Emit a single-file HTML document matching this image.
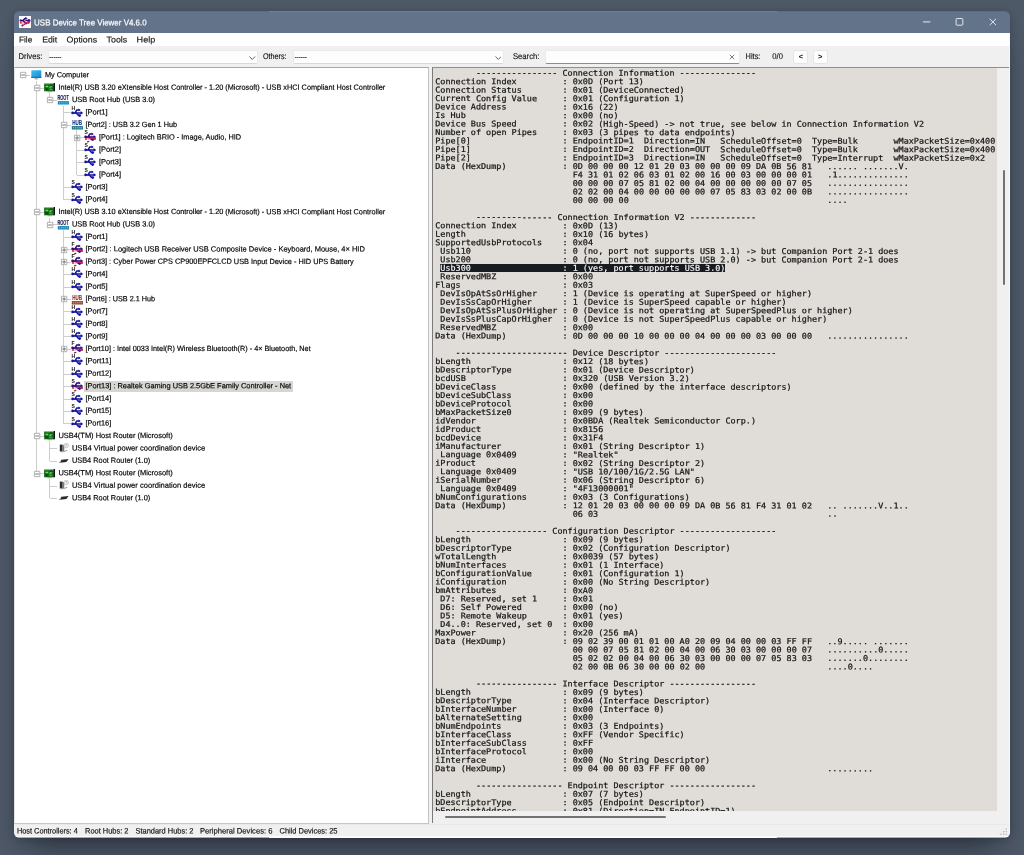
<!DOCTYPE html>
<html lang="en"><head><meta charset="utf-8"><title>USB Device Tree Viewer V4.6.0</title>
<style>
*{box-sizing:border-box;margin:0;padding:0}
html,body{width:1024px;height:855px;overflow:hidden}
body{background:#4e5968;font-family:"Liberation Sans",Arial,sans-serif;position:relative}
.win div,.win span,.win svg{position:absolute}
.win{position:absolute;left:14px;top:11px;width:996px;height:826.6px;background:#f0f0f0;clip-path:inset(.55px 0 0 0 round 5px);overflow:hidden;will-change:transform}
.shadow{position:absolute;left:14px;top:11px;width:996px;height:826.6px;border-radius:6px;box-shadow:0 22px 32px -14px rgba(5,8,16,.47),0 1px 8px rgba(5,8,16,.22)}
.x{white-space:nowrap;transform-origin:0 50%;display:block}
.title{left:0;top:0;width:996px;height:21.5px;background:#63748a;border-top:1.4px solid #6e7f96}
.tt{height:16px;line-height:16px;font-size:8.6px;color:#fff;-webkit-text-stroke:.2px #fff}
.menubar{left:0;top:21.5px;width:996px;height:13.6px;background:#fff}
.mi{height:15px;line-height:15px;font-size:8.5px;color:#151515;-webkit-text-stroke:.15px #151515}
.lbl{font-size:8.3px;line-height:12px;height:12px;color:#151515;-webkit-text-stroke:.15px #151515}
.combo{background:#fdfdfd;border:.8px solid #eaeaea;border-bottom-color:#d8d8d8;border-radius:2px;height:13.6px;top:39px}
.cd{font-size:6.4px;line-height:9px;height:9px;color:#222;letter-spacing:.25px;-webkit-text-stroke:.3px #222}
.btn{top:38.7px;width:15px;height:14.4px;background:#fdfdfd;border:.8px solid #e4e4e4;border-radius:2.5px}
.bt{font-size:7.4px;line-height:12px;height:12px;color:#111;font-weight:bold}
.tree{left:0;top:56px;width:415px;height:757.3px;background:#fff;border:1px solid #a6a6a6;border-left-color:#e2e2e2;border-right-color:#c2c2c2;border-bottom-color:#c6c6c6;overflow:hidden}
.t{font-size:7.55px;line-height:12px;height:12px;color:#050505;-webkit-text-stroke:.18px #050505}
.selbg{background:#d8d6d2}
.ln{background:#cdcdcd}
.pane{left:418px;top:56px;width:578px;height:756px;background:#e0ddd8;border-left:1px solid #7a7a7a;border-top:1px solid #8e8e8e;overflow:hidden}
.m{font-family:"DejaVu Sans Mono","Liberation Mono",monospace;font-size:8.05px;line-height:10px;height:10px;color:#141414;white-space:pre;-webkit-text-stroke:.22px #141414}
.vsb{right:0;top:0;width:13.3px;height:743px;background:#f0f0f0}
.hsb{left:0;bottom:0;width:578px;height:12.4px;background:#f0f0f0}
.st{font-size:7.9px;line-height:14px;height:14px;color:#151515;-webkit-text-stroke:.18px #151515}
</style></head><body>
<div class="shadow"></div>
<div class="win">
<div class="title"></div>
<svg style="left:5px;top:5px" width="12" height="12" viewBox="0 0 12 12"><rect width="12" height="12" fill="#fdfafd"/><ellipse cx="5.6" cy="6.2" rx="4.2" ry="2.4" fill="#f49ac0" opacity=".6"/><g fill="none" stroke="#24107e" stroke-width="1.4" stroke-linejoin="round"><path d="M1.2 4.5H4.2L5.4 3L7 2.2"/><path d="M4 4.6L6.2 6.8L7.6 8"/><path d="M6.4 4.2L9.8 4.6"/></g><path d="M6.2 1L8.6 2.2L6.6 3.4Z" fill="#24107e"/><circle cx="10" cy="4.6" r="1.5" fill="#2a14a0"/><circle cx="1.6" cy="4.5" r="1.1" fill="#24107e"/><circle cx="9.4" cy="6.6" r="1.3" fill="#e0142c"/><path d="M5.6 6.6L8.6 6.8" stroke="#e0142c" stroke-width="1.1"/><circle cx="1.8" cy="6.8" r="1" fill="#e03040"/><ellipse cx="3.6" cy="9.4" rx="1.3" ry=".9" fill="#9c1428" transform="rotate(-25 3.6 9.4)"/><path d="M4.6 8.8L6.6 7.8" stroke="#7a1040" stroke-width="1"/></svg>
<span class="x tt" style="left:20px;top:3px;transform:translate(0.1px,0.5px) matrix(0.9249,0.0005,0,1,0,0);">USB Device Tree Viewer V4.6.0</span>
<svg style="left:896px;top:0" width="100" height="21" viewBox="0 0 100 21"><g fill="none" stroke="#f2f4f8" stroke-width="0.9"><path d="M12.9 10.9H20.4"/><rect x="46.1" y="7.5" width="6.7" height="6.7" rx="0.9"/><path d="M79.7 7.8L86 14.1M86 7.8L79.7 14.1"/></g></svg>
<div class="menubar"></div>
<span class="x mi" style="left:5px;top:21px;transform:translate(0.0px,0.6px) matrix(0.9708,0.0005,0,1,0,0);">File</span>
<span class="x mi" style="left:28px;top:21px;transform:translate(0.2px,0.6px) matrix(1.0239,0.0005,0,1,0,0);">Edit</span>
<span class="x mi" style="left:52px;top:21px;transform:translate(0.6px,0.6px) matrix(1.041,0.0005,0,1,0,0);">Options</span>
<span class="x mi" style="left:92px;top:21px;transform:translate(0.6px,0.6px) matrix(1.0378,0.0005,0,1,0,0);">Tools</span>
<span class="x mi" style="left:122px;top:21px;transform:translate(0.6px,0.6px) matrix(1.0695,0.0005,0,1,0,0);">Help</span>
<span class="x lbl" style="left:4px;top:38px;transform:translate(0.6px,0.9px) matrix(0.9215,0.0005,0,1,0,0);">Drives:</span>
<div class="combo" style="left:33.6px;width:210.8px"><svg style="right:1.6px;top:4.6px" width="6.6" height="4.4" viewBox="0 0 6 4"><path d="M.4.5L3 3.1L5.6.5" fill="none" stroke="#444" stroke-width=".75"/></svg></div>
<span class="x cd" style="left:35px;top:41px;transform:translate(0.3px,0.2px) matrix(0.86,0.0005,0,1,0,0);">------</span>
<span class="x lbl" style="left:249px;top:38px;transform:translate(0px,0.9px) matrix(0.8672,0.0005,0,1,0,0);">Others:</span>
<div class="combo" style="left:279.1px;width:210.8px"><svg style="right:1.6px;top:4.6px" width="6.6" height="4.4" viewBox="0 0 6 4"><path d="M.4.5L3 3.1L5.6.5" fill="none" stroke="#444" stroke-width=".75"/></svg></div>
<span class="x cd" style="left:280px;top:41px;transform:translate(0.8px,0.2px) matrix(0.86,0.0005,0,1,0,0);">------</span>
<span class="x lbl" style="left:499px;top:38px;transform:translate(0px,0.9px) matrix(0.9228,0.0005,0,1,0,0);">Search:</span>
<div class="combo" style="left:530.8px;width:194.8px;border-bottom-color:#8c8c8c"><svg style="right:3.4px;top:3px" width="6" height="6" viewBox="0 0 6 6"><path d="M.8.8L5.2 5.2M5.2.8L.8 5.2" fill="none" stroke="#5a5a5a" stroke-width=".8"/></svg></div>
<span class="x lbl" style="left:731px;top:38px;transform:translate(0.6px,0.9px) matrix(0.8916,0.0005,0,1,0,0);">Hits:</span>
<span class="x lbl" style="left:758px;top:38px;transform:translate(0.3px,0.9px) matrix(0.9184,0.0005,0,1,0,0);">0/0</span>
<div class="btn" style="left:779.3px"></div><div class="btn" style="left:798.7px"></div>
<span class="x bt" style="left:784px;top:39px;transform:translate(0.7px,0.9px) matrix(1,0.0005,0,1,0,0);">&lt;</span>
<span class="x bt" style="left:804px;top:39px;transform:translate(0.1px,0.9px) matrix(1,0.0005,0,1,0,0);">&gt;</span>
<div class="tree">
<div class="ln" style="left:20.98px;top:12.7px;width:0.85px;height:392.88px"></div>
<div class="ln" style="left:34.48px;top:25.14px;width:0.85px;height:7.24px"></div>
<div class="ln" style="left:47.98px;top:37.58px;width:0.85px;height:94.32px"></div>
<div class="ln" style="left:61.48px;top:62.46px;width:0.85px;height:44.56px"></div>
<div class="ln" style="left:34.48px;top:149.54px;width:0.85px;height:7.24px"></div>
<div class="ln" style="left:47.98px;top:161.98px;width:0.85px;height:193.84px"></div>
<div class="ln" style="left:34.48px;top:373.46px;width:0.85px;height:19.68px"></div>
<div class="ln" style="left:34.48px;top:410.78px;width:0.85px;height:19.68px"></div>
<div class="ln" style="left:8.0px;top:7.08px;width:7.4px;height:0.85px"></div>
<svg style="left:4.0px;top:3.45px" width="8" height="8" viewBox="0 0 8 8"><rect x="1.4" y="1.3" width="5.4" height="5.4" rx=".2" fill="#fff" stroke="#949494" stroke-width=".75"/><path d="M2.2 4H6" stroke="#5a5a5a" stroke-width=".8"/></svg>
<svg style="left:15.7px;top:1.6px" width="12" height="11" viewBox="0 0 12 11"><defs><linearGradient id="mg" x1="0" y1="0" x2="1" y2="1"><stop offset="0" stop-color="#3fc0f0"/><stop offset="1" stop-color="#1488d4"/></linearGradient></defs><rect x="0.3" y="0.3" width="10" height="7.4" rx="0.5" fill="url(#mg)"/><rect x="0.3" y="6.9" width="10" height="0.9" fill="#1a5e8e"/><rect x="4.1" y="7.8" width="2.4" height="1" fill="#8494a0"/><rect x="3.2" y="8.7" width="4.2" height="0.7" fill="#9aa6b0"/></svg>
<span class="x t" style="left:29px;top:1px;transform:translate(0.9px,0.2px) matrix(0.9733,0.0005,0,1,0,0);">My Computer</span>
<div class="ln" style="left:21.5px;top:19.52px;width:7.4px;height:0.85px"></div>
<svg style="left:17.5px;top:15.89px" width="8" height="8" viewBox="0 0 8 8"><rect x="1.4" y="1.3" width="5.4" height="5.4" rx=".2" fill="#fff" stroke="#949494" stroke-width=".75"/><path d="M2.2 4H6" stroke="#5a5a5a" stroke-width=".8"/></svg>
<svg style="left:28.6px;top:14.94px" width="12" height="10" viewBox="0 0 12 10"><rect x="0.1" y="0.7" width="9.9" height="7.6" fill="#17691f"/><rect x="0.1" y="0.7" width="9.9" height="1" fill="#2c8a2e"/><path d="M1 3.4L3 2.4L4.6 3.4L3.2 4.6Z" fill="#7ad860"/><path d="M4.8 4.2L7.4 2.6L8.6 3.4L6 5.4Z" fill="#5cc048"/><path d="M1.2 5.6L3 5.2L4.4 6.6L2.4 7.4Z" fill="#0d3d12"/><path d="M5 6L7.6 5.4L8.6 6.8L5.8 7.4Z" fill="#43a838"/><rect x="6" y="1.6" width="2.4" height="1" fill="#0d3d12"/><rect x="9.7" y="0" width="1.3" height="8.3" fill="#141414"/><rect x="3.4" y="8.3" width="4.4" height="0.9" fill="#7aa83a"/></svg>
<span class="x t" style="left:43px;top:13px;transform:translate(0.4px,0.64px) matrix(0.9681,0.0005,0,1,0,0);">Intel(R) USB 3.20 eXtensible Host Controller - 1.20 (Microsoft) - USB xHCI Compliant Host Controller</span>
<div class="ln" style="left:35.0px;top:31.95px;width:7.4px;height:0.85px"></div>
<svg style="left:31.0px;top:28.33px" width="8" height="8" viewBox="0 0 8 8"><rect x="1.4" y="1.3" width="5.4" height="5.4" rx=".2" fill="#fff" stroke="#949494" stroke-width=".75"/><path d="M2.2 4H6" stroke="#5a5a5a" stroke-width=".8"/></svg>
<svg style="left:42.0px;top:26.48px" width="13" height="11" viewBox="0 0 13 11"><text x="0.4" y="5.8" font-family="Liberation Sans, sans-serif" font-weight="bold" font-size="6.4" textLength="11.4" lengthAdjust="spacingAndGlyphs" fill="#1c2252" stroke="#1c2252" stroke-width=".15">ROOT</text><rect x="0.8" y="7.1" width="11.2" height="3.4" fill="#1a86b4"/><g fill="#5ccaf0"><rect x="2" y="8.2" width="1.2" height="1.2"/><rect x="4.1" y="8.2" width="1.2" height="1.2"/><rect x="6.2" y="8.2" width="1.2" height="1.2"/><rect x="8.3" y="8.2" width="1.2" height="1.2"/><rect x="10.2" y="8.2" width="1" height="1.2"/></g></svg>
<span class="x t" style="left:56px;top:26px;transform:translate(0.9px,0.08px) matrix(0.9804,0.0005,0,1,0,0);">USB Root Hub (USB 3.0)</span>
<div class="ln" style="left:48.5px;top:44.39px;width:7.4px;height:0.85px"></div>
<svg style="left:55.5px;top:37.52px" width="13" height="12" viewBox="0 0 13 12"><g fill="none" stroke="#14149a" stroke-width="1.45" stroke-linejoin="round" stroke-linecap="round"><path d="M1.6 6.9H10.4"/><path d="M4 6.9L5.8 4H8"/><path d="M5.2 6.9L7.2 9.3H8"/></g><g fill="#14149a"><circle cx="1.6" cy="6.9" r="1.35"/><path d="M9.6 5.1L12.2 6.9L9.6 8.7Z"/><path d="M7.6 2.5L9.6 3.95L7.6 5.4Z"/></g><circle cx="8.6" cy="9.6" r="1.45" fill="#1010c4"/><text x="0.4" y="4.2" font-family="Liberation Sans, sans-serif" font-weight="bold" font-size="5" fill="#111">H</text></svg>
<span class="x t" style="left:70px;top:38px;transform:translate(0.4px,0.52px) matrix(0.9936,0.0005,0,1,0,0);">[Port1]</span>
<div class="ln" style="left:48.5px;top:56.83px;width:7.4px;height:0.85px"></div>
<svg style="left:44.5px;top:53.21px" width="8" height="8" viewBox="0 0 8 8"><rect x="1.4" y="1.3" width="5.4" height="5.4" rx=".2" fill="#fff" stroke="#949494" stroke-width=".75"/><path d="M2.2 4H6" stroke="#5a5a5a" stroke-width=".8"/></svg>
<svg style="left:55.5px;top:51.36px" width="13" height="11" viewBox="0 0 13 11"><text x="1.3" y="5.8" font-family="Liberation Sans, sans-serif" font-weight="bold" font-size="6.4" textLength="9.8" lengthAdjust="spacingAndGlyphs" fill="#243c8c" stroke="#243c8c" stroke-width=".15">HUB</text><rect x="0.8" y="7.1" width="11.2" height="3.4" fill="#1a7886"/><g fill="#7fd0dc"><rect x="2" y="8.2" width="1.2" height="1.2"/><rect x="4.1" y="8.2" width="1.2" height="1.2"/><rect x="6.2" y="8.2" width="1.2" height="1.2"/><rect x="8.3" y="8.2" width="1.2" height="1.2"/><rect x="10.2" y="8.2" width="1" height="1.2"/></g></svg>
<span class="x t" style="left:70px;top:50px;transform:translate(0.4px,0.96px) matrix(0.9615,0.0005,0,1,0,0);">[Port2] : USB 3.2 Gen 1 Hub</span>
<div class="ln" style="left:62.0px;top:69.27px;width:7.4px;height:0.85px"></div>
<svg style="left:58.0px;top:65.65px" width="8" height="8" viewBox="0 0 8 8"><rect x="1.4" y="1.3" width="5.4" height="5.4" rx=".2" fill="#fff" stroke="#949494" stroke-width=".75"/><path d="M2.2 4H6M4.1 2.1V5.9" stroke="#5a5a5a" stroke-width=".8"/></svg>
<svg style="left:69.0px;top:61.8px" width="13" height="13" viewBox="0 0 13 13"><ellipse cx="6.2" cy="7.8" rx="4" ry="2" fill="#ee6aa8" opacity=".5"/><g fill="none" stroke="#2a0e80" stroke-width="1.45" stroke-linejoin="round" stroke-linecap="round"><path d="M1.6 6.9H10.4"/><path d="M4 6.9L5.8 4H8"/><path d="M5.2 6.9L7.2 9.3H8"/></g><g fill="#2a0e80"><circle cx="1.6" cy="6.9" r="1.35"/><path d="M9.6 5.1L12.2 6.9L9.6 8.7Z"/><path d="M7.6 2.5L9.6 3.95L7.6 5.4Z"/></g><circle cx="8.6" cy="9.6" r="1.45" fill="#3a1090"/><g fill="none" stroke="#e01c34" stroke-width=".9"><path d="M9.6 8.6L11.6 8.9"/><path d="M1.4 8.2L2.6 9.6"/></g><circle cx="10.8" cy="8.8" r="1.25" fill="#e01c34"/><circle cx="2" cy="9" r="1.1" fill="#e0403c"/><path d="M4.4 8.3L7.4 8.4" stroke="#e8406a" stroke-width="1"/><ellipse cx="4.2" cy="11.6" rx="1.5" ry=".7" fill="#a01c2c" transform="rotate(-20 4.2 11.6)"/><text x="0.4" y="4.2" font-family="Liberation Sans, sans-serif" font-weight="bold" font-size="5" fill="#111">S</text></svg>
<span class="x t" style="left:83px;top:63px;transform:translate(0.9px,0.4px) matrix(0.9776,0.0005,0,1,0,0);">[Port1] : Logitech BRIO - Image, Audio, HID</span>
<div class="ln" style="left:62.0px;top:81.71px;width:7.4px;height:0.85px"></div>
<svg style="left:69.0px;top:74.84px" width="13" height="12" viewBox="0 0 13 12"><g fill="none" stroke="#14149a" stroke-width="1.45" stroke-linejoin="round" stroke-linecap="round"><path d="M1.6 6.9H10.4"/><path d="M4 6.9L5.8 4H8"/><path d="M5.2 6.9L7.2 9.3H8"/></g><g fill="#14149a"><circle cx="1.6" cy="6.9" r="1.35"/><path d="M9.6 5.1L12.2 6.9L9.6 8.7Z"/><path d="M7.6 2.5L9.6 3.95L7.6 5.4Z"/></g><circle cx="8.6" cy="9.6" r="1.45" fill="#1010c4"/><text x="0.4" y="4.2" font-family="Liberation Sans, sans-serif" font-weight="bold" font-size="5" fill="#111">S</text></svg>
<span class="x t" style="left:83px;top:75px;transform:translate(0.9px,0.84px) matrix(0.9936,0.0005,0,1,0,0);">[Port2]</span>
<div class="ln" style="left:62.0px;top:94.15px;width:7.4px;height:0.85px"></div>
<svg style="left:69.0px;top:87.28px" width="13" height="12" viewBox="0 0 13 12"><g fill="none" stroke="#14149a" stroke-width="1.45" stroke-linejoin="round" stroke-linecap="round"><path d="M1.6 6.9H10.4"/><path d="M4 6.9L5.8 4H8"/><path d="M5.2 6.9L7.2 9.3H8"/></g><g fill="#14149a"><circle cx="1.6" cy="6.9" r="1.35"/><path d="M9.6 5.1L12.2 6.9L9.6 8.7Z"/><path d="M7.6 2.5L9.6 3.95L7.6 5.4Z"/></g><circle cx="8.6" cy="9.6" r="1.45" fill="#1010c4"/><text x="0.4" y="4.2" font-family="Liberation Sans, sans-serif" font-weight="bold" font-size="5" fill="#111">S</text></svg>
<span class="x t" style="left:83px;top:88px;transform:translate(0.9px,0.28px) matrix(0.9936,0.0005,0,1,0,0);">[Port3]</span>
<div class="ln" style="left:62.0px;top:106.59px;width:7.4px;height:0.85px"></div>
<svg style="left:69.0px;top:99.72px" width="13" height="12" viewBox="0 0 13 12"><g fill="none" stroke="#14149a" stroke-width="1.45" stroke-linejoin="round" stroke-linecap="round"><path d="M1.6 6.9H10.4"/><path d="M4 6.9L5.8 4H8"/><path d="M5.2 6.9L7.2 9.3H8"/></g><g fill="#14149a"><circle cx="1.6" cy="6.9" r="1.35"/><path d="M9.6 5.1L12.2 6.9L9.6 8.7Z"/><path d="M7.6 2.5L9.6 3.95L7.6 5.4Z"/></g><circle cx="8.6" cy="9.6" r="1.45" fill="#1010c4"/><text x="0.4" y="4.2" font-family="Liberation Sans, sans-serif" font-weight="bold" font-size="5" fill="#111">S</text></svg>
<span class="x t" style="left:83px;top:100px;transform:translate(0.9px,0.72px) matrix(0.9936,0.0005,0,1,0,0);">[Port4]</span>
<div class="ln" style="left:48.5px;top:119.03px;width:7.4px;height:0.85px"></div>
<svg style="left:55.5px;top:112.16px" width="13" height="12" viewBox="0 0 13 12"><g fill="none" stroke="#14149a" stroke-width="1.45" stroke-linejoin="round" stroke-linecap="round"><path d="M1.6 6.9H10.4"/><path d="M4 6.9L5.8 4H8"/><path d="M5.2 6.9L7.2 9.3H8"/></g><g fill="#14149a"><circle cx="1.6" cy="6.9" r="1.35"/><path d="M9.6 5.1L12.2 6.9L9.6 8.7Z"/><path d="M7.6 2.5L9.6 3.95L7.6 5.4Z"/></g><circle cx="8.6" cy="9.6" r="1.45" fill="#1010c4"/><text x="0.4" y="4.2" font-family="Liberation Sans, sans-serif" font-weight="bold" font-size="5" fill="#111">S</text></svg>
<span class="x t" style="left:70px;top:113px;transform:translate(0.4px,0.16px) matrix(0.9936,0.0005,0,1,0,0);">[Port3]</span>
<div class="ln" style="left:48.5px;top:131.47px;width:7.4px;height:0.85px"></div>
<svg style="left:55.5px;top:124.6px" width="13" height="12" viewBox="0 0 13 12"><g fill="none" stroke="#14149a" stroke-width="1.45" stroke-linejoin="round" stroke-linecap="round"><path d="M1.6 6.9H10.4"/><path d="M4 6.9L5.8 4H8"/><path d="M5.2 6.9L7.2 9.3H8"/></g><g fill="#14149a"><circle cx="1.6" cy="6.9" r="1.35"/><path d="M9.6 5.1L12.2 6.9L9.6 8.7Z"/><path d="M7.6 2.5L9.6 3.95L7.6 5.4Z"/></g><circle cx="8.6" cy="9.6" r="1.45" fill="#1010c4"/><text x="0.4" y="4.2" font-family="Liberation Sans, sans-serif" font-weight="bold" font-size="5" fill="#111">S</text></svg>
<span class="x t" style="left:70px;top:125px;transform:translate(0.4px,0.6px) matrix(0.9936,0.0005,0,1,0,0);">[Port4]</span>
<div class="ln" style="left:21.5px;top:143.91px;width:7.4px;height:0.85px"></div>
<svg style="left:17.5px;top:140.29px" width="8" height="8" viewBox="0 0 8 8"><rect x="1.4" y="1.3" width="5.4" height="5.4" rx=".2" fill="#fff" stroke="#949494" stroke-width=".75"/><path d="M2.2 4H6" stroke="#5a5a5a" stroke-width=".8"/></svg>
<svg style="left:28.6px;top:139.34px" width="12" height="10" viewBox="0 0 12 10"><rect x="0.1" y="0.7" width="9.9" height="7.6" fill="#17691f"/><rect x="0.1" y="0.7" width="9.9" height="1" fill="#2c8a2e"/><path d="M1 3.4L3 2.4L4.6 3.4L3.2 4.6Z" fill="#7ad860"/><path d="M4.8 4.2L7.4 2.6L8.6 3.4L6 5.4Z" fill="#5cc048"/><path d="M1.2 5.6L3 5.2L4.4 6.6L2.4 7.4Z" fill="#0d3d12"/><path d="M5 6L7.6 5.4L8.6 6.8L5.8 7.4Z" fill="#43a838"/><rect x="6" y="1.6" width="2.4" height="1" fill="#0d3d12"/><rect x="9.7" y="0" width="1.3" height="8.3" fill="#141414"/><rect x="3.4" y="8.3" width="4.4" height="0.9" fill="#7aa83a"/></svg>
<span class="x t" style="left:43px;top:138px;transform:translate(0.4px,0.04px) matrix(0.9681,0.0005,0,1,0,0);">Intel(R) USB 3.10 eXtensible Host Controller - 1.20 (Microsoft) - USB xHCI Compliant Host Controller</span>
<div class="ln" style="left:35.0px;top:156.35px;width:7.4px;height:0.85px"></div>
<svg style="left:31.0px;top:152.73px" width="8" height="8" viewBox="0 0 8 8"><rect x="1.4" y="1.3" width="5.4" height="5.4" rx=".2" fill="#fff" stroke="#949494" stroke-width=".75"/><path d="M2.2 4H6" stroke="#5a5a5a" stroke-width=".8"/></svg>
<svg style="left:42.0px;top:150.88px" width="13" height="11" viewBox="0 0 13 11"><text x="0.4" y="5.8" font-family="Liberation Sans, sans-serif" font-weight="bold" font-size="6.4" textLength="11.4" lengthAdjust="spacingAndGlyphs" fill="#1c2252" stroke="#1c2252" stroke-width=".15">ROOT</text><rect x="0.8" y="7.1" width="11.2" height="3.4" fill="#1a86b4"/><g fill="#5ccaf0"><rect x="2" y="8.2" width="1.2" height="1.2"/><rect x="4.1" y="8.2" width="1.2" height="1.2"/><rect x="6.2" y="8.2" width="1.2" height="1.2"/><rect x="8.3" y="8.2" width="1.2" height="1.2"/><rect x="10.2" y="8.2" width="1" height="1.2"/></g></svg>
<span class="x t" style="left:56px;top:150px;transform:translate(0.9px,0.48px) matrix(0.9804,0.0005,0,1,0,0);">USB Root Hub (USB 3.0)</span>
<div class="ln" style="left:48.5px;top:168.79px;width:7.4px;height:0.85px"></div>
<svg style="left:55.5px;top:161.92px" width="13" height="12" viewBox="0 0 13 12"><g fill="none" stroke="#14149a" stroke-width="1.45" stroke-linejoin="round" stroke-linecap="round"><path d="M1.6 6.9H10.4"/><path d="M4 6.9L5.8 4H8"/><path d="M5.2 6.9L7.2 9.3H8"/></g><g fill="#14149a"><circle cx="1.6" cy="6.9" r="1.35"/><path d="M9.6 5.1L12.2 6.9L9.6 8.7Z"/><path d="M7.6 2.5L9.6 3.95L7.6 5.4Z"/></g><circle cx="8.6" cy="9.6" r="1.45" fill="#1010c4"/><text x="0.4" y="4.2" font-family="Liberation Sans, sans-serif" font-weight="bold" font-size="5" fill="#111">H</text></svg>
<span class="x t" style="left:70px;top:162px;transform:translate(0.4px,0.92px) matrix(0.9936,0.0005,0,1,0,0);">[Port1]</span>
<div class="ln" style="left:48.5px;top:181.23px;width:7.4px;height:0.85px"></div>
<svg style="left:44.5px;top:177.61px" width="8" height="8" viewBox="0 0 8 8"><rect x="1.4" y="1.3" width="5.4" height="5.4" rx=".2" fill="#fff" stroke="#949494" stroke-width=".75"/><path d="M2.2 4H6M4.1 2.1V5.9" stroke="#5a5a5a" stroke-width=".8"/></svg>
<svg style="left:55.5px;top:173.76px" width="13" height="13" viewBox="0 0 13 13"><ellipse cx="6.2" cy="7.8" rx="4" ry="2" fill="#ee6aa8" opacity=".5"/><g fill="none" stroke="#2a0e80" stroke-width="1.45" stroke-linejoin="round" stroke-linecap="round"><path d="M1.6 6.9H10.4"/><path d="M4 6.9L5.8 4H8"/><path d="M5.2 6.9L7.2 9.3H8"/></g><g fill="#2a0e80"><circle cx="1.6" cy="6.9" r="1.35"/><path d="M9.6 5.1L12.2 6.9L9.6 8.7Z"/><path d="M7.6 2.5L9.6 3.95L7.6 5.4Z"/></g><circle cx="8.6" cy="9.6" r="1.45" fill="#3a1090"/><g fill="none" stroke="#e01c34" stroke-width=".9"><path d="M9.6 8.6L11.6 8.9"/><path d="M1.4 8.2L2.6 9.6"/></g><circle cx="10.8" cy="8.8" r="1.25" fill="#e01c34"/><circle cx="2" cy="9" r="1.1" fill="#e0403c"/><path d="M4.4 8.3L7.4 8.4" stroke="#e8406a" stroke-width="1"/><ellipse cx="4.2" cy="11.6" rx="1.5" ry=".7" fill="#a01c2c" transform="rotate(-20 4.2 11.6)"/><text x="0.4" y="4.2" font-family="Liberation Sans, sans-serif" font-weight="bold" font-size="5" fill="#111">F</text></svg>
<span class="x t" style="left:70px;top:175px;transform:translate(0.4px,0.36px) matrix(0.9937,0.0005,0,1,0,0);">[Port2] : Logitech USB Receiver USB Composite Device - Keyboard, Mouse, 4× HID</span>
<div class="ln" style="left:48.5px;top:193.68px;width:7.4px;height:0.85px"></div>
<svg style="left:44.5px;top:190.05px" width="8" height="8" viewBox="0 0 8 8"><rect x="1.4" y="1.3" width="5.4" height="5.4" rx=".2" fill="#fff" stroke="#949494" stroke-width=".75"/><path d="M2.2 4H6M4.1 2.1V5.9" stroke="#5a5a5a" stroke-width=".8"/></svg>
<svg style="left:55.5px;top:186.2px" width="13" height="13" viewBox="0 0 13 13"><ellipse cx="6.2" cy="7.8" rx="4" ry="2" fill="#ee6aa8" opacity=".5"/><g fill="none" stroke="#2a0e80" stroke-width="1.45" stroke-linejoin="round" stroke-linecap="round"><path d="M1.6 6.9H10.4"/><path d="M4 6.9L5.8 4H8"/><path d="M5.2 6.9L7.2 9.3H8"/></g><g fill="#2a0e80"><circle cx="1.6" cy="6.9" r="1.35"/><path d="M9.6 5.1L12.2 6.9L9.6 8.7Z"/><path d="M7.6 2.5L9.6 3.95L7.6 5.4Z"/></g><circle cx="8.6" cy="9.6" r="1.45" fill="#3a1090"/><g fill="none" stroke="#e01c34" stroke-width=".9"><path d="M9.6 8.6L11.6 8.9"/><path d="M1.4 8.2L2.6 9.6"/></g><circle cx="10.8" cy="8.8" r="1.25" fill="#e01c34"/><circle cx="2" cy="9" r="1.1" fill="#e0403c"/><path d="M4.4 8.3L7.4 8.4" stroke="#e8406a" stroke-width="1"/><ellipse cx="4.2" cy="11.6" rx="1.5" ry=".7" fill="#a01c2c" transform="rotate(-20 4.2 11.6)"/><text x="0.4" y="4.2" font-family="Liberation Sans, sans-serif" font-weight="bold" font-size="5" fill="#111">F</text></svg>
<span class="x t" style="left:70px;top:187px;transform:translate(0.4px,0.8px) matrix(0.9749,0.0005,0,1,0,0);">[Port3] : Cyber Power CPS CP900EPFCLCD USB Input Device - HID UPS Battery</span>
<div class="ln" style="left:48.5px;top:206.11px;width:7.4px;height:0.85px"></div>
<svg style="left:55.5px;top:199.24px" width="13" height="12" viewBox="0 0 13 12"><g fill="none" stroke="#14149a" stroke-width="1.45" stroke-linejoin="round" stroke-linecap="round"><path d="M1.6 6.9H10.4"/><path d="M4 6.9L5.8 4H8"/><path d="M5.2 6.9L7.2 9.3H8"/></g><g fill="#14149a"><circle cx="1.6" cy="6.9" r="1.35"/><path d="M9.6 5.1L12.2 6.9L9.6 8.7Z"/><path d="M7.6 2.5L9.6 3.95L7.6 5.4Z"/></g><circle cx="8.6" cy="9.6" r="1.45" fill="#1010c4"/><text x="0.4" y="4.2" font-family="Liberation Sans, sans-serif" font-weight="bold" font-size="5" fill="#111">H</text></svg>
<span class="x t" style="left:70px;top:200px;transform:translate(0.4px,0.24px) matrix(0.9936,0.0005,0,1,0,0);">[Port4]</span>
<div class="ln" style="left:48.5px;top:218.56px;width:7.4px;height:0.85px"></div>
<svg style="left:55.5px;top:211.68px" width="13" height="12" viewBox="0 0 13 12"><g fill="none" stroke="#14149a" stroke-width="1.45" stroke-linejoin="round" stroke-linecap="round"><path d="M1.6 6.9H10.4"/><path d="M4 6.9L5.8 4H8"/><path d="M5.2 6.9L7.2 9.3H8"/></g><g fill="#14149a"><circle cx="1.6" cy="6.9" r="1.35"/><path d="M9.6 5.1L12.2 6.9L9.6 8.7Z"/><path d="M7.6 2.5L9.6 3.95L7.6 5.4Z"/></g><circle cx="8.6" cy="9.6" r="1.45" fill="#1010c4"/><text x="0.4" y="4.2" font-family="Liberation Sans, sans-serif" font-weight="bold" font-size="5" fill="#111">H</text></svg>
<span class="x t" style="left:70px;top:212px;transform:translate(0.4px,0.68px) matrix(0.9936,0.0005,0,1,0,0);">[Port5]</span>
<div class="ln" style="left:48.5px;top:230.99px;width:7.4px;height:0.85px"></div>
<svg style="left:44.5px;top:227.37px" width="8" height="8" viewBox="0 0 8 8"><rect x="1.4" y="1.3" width="5.4" height="5.4" rx=".2" fill="#fff" stroke="#949494" stroke-width=".75"/><path d="M2.2 4H6M4.1 2.1V5.9" stroke="#5a5a5a" stroke-width=".8"/></svg>
<svg style="left:55.5px;top:225.52px" width="13" height="11" viewBox="0 0 13 11"><text x="1.3" y="5.8" font-family="Liberation Sans, sans-serif" font-weight="bold" font-size="6.4" textLength="9.8" lengthAdjust="spacingAndGlyphs" fill="#9a3626" stroke="#9a3626" stroke-width=".15">HUB</text><rect x="0.8" y="7.1" width="11.2" height="3.4" fill="#88442e"/><g fill="#d8a890"><rect x="2" y="8.2" width="1.2" height="1.2"/><rect x="4.1" y="8.2" width="1.2" height="1.2"/><rect x="6.2" y="8.2" width="1.2" height="1.2"/><rect x="8.3" y="8.2" width="1.2" height="1.2"/><rect x="10.2" y="8.2" width="1" height="1.2"/></g></svg>
<span class="x t" style="left:70px;top:225px;transform:translate(0.4px,0.12px) matrix(0.9586,0.0005,0,1,0,0);">[Port6] : USB 2.1 Hub</span>
<div class="ln" style="left:48.5px;top:243.44px;width:7.4px;height:0.85px"></div>
<svg style="left:55.5px;top:236.56px" width="13" height="12" viewBox="0 0 13 12"><g fill="none" stroke="#14149a" stroke-width="1.45" stroke-linejoin="round" stroke-linecap="round"><path d="M1.6 6.9H10.4"/><path d="M4 6.9L5.8 4H8"/><path d="M5.2 6.9L7.2 9.3H8"/></g><g fill="#14149a"><circle cx="1.6" cy="6.9" r="1.35"/><path d="M9.6 5.1L12.2 6.9L9.6 8.7Z"/><path d="M7.6 2.5L9.6 3.95L7.6 5.4Z"/></g><circle cx="8.6" cy="9.6" r="1.45" fill="#1010c4"/><text x="0.4" y="4.2" font-family="Liberation Sans, sans-serif" font-weight="bold" font-size="5" fill="#111">H</text></svg>
<span class="x t" style="left:70px;top:237px;transform:translate(0.4px,0.56px) matrix(0.9936,0.0005,0,1,0,0);">[Port7]</span>
<div class="ln" style="left:48.5px;top:255.87px;width:7.4px;height:0.85px"></div>
<svg style="left:55.5px;top:249.0px" width="13" height="12" viewBox="0 0 13 12"><g fill="none" stroke="#14149a" stroke-width="1.45" stroke-linejoin="round" stroke-linecap="round"><path d="M1.6 6.9H10.4"/><path d="M4 6.9L5.8 4H8"/><path d="M5.2 6.9L7.2 9.3H8"/></g><g fill="#14149a"><circle cx="1.6" cy="6.9" r="1.35"/><path d="M9.6 5.1L12.2 6.9L9.6 8.7Z"/><path d="M7.6 2.5L9.6 3.95L7.6 5.4Z"/></g><circle cx="8.6" cy="9.6" r="1.45" fill="#1010c4"/><text x="0.4" y="4.2" font-family="Liberation Sans, sans-serif" font-weight="bold" font-size="5" fill="#111">H</text></svg>
<span class="x t" style="left:70px;top:249px;transform:translate(0.4px,1.0px) matrix(0.9936,0.0005,0,1,0,0);">[Port8]</span>
<div class="ln" style="left:48.5px;top:268.31px;width:7.4px;height:0.85px"></div>
<svg style="left:55.5px;top:261.44px" width="13" height="12" viewBox="0 0 13 12"><g fill="none" stroke="#14149a" stroke-width="1.45" stroke-linejoin="round" stroke-linecap="round"><path d="M1.6 6.9H10.4"/><path d="M4 6.9L5.8 4H8"/><path d="M5.2 6.9L7.2 9.3H8"/></g><g fill="#14149a"><circle cx="1.6" cy="6.9" r="1.35"/><path d="M9.6 5.1L12.2 6.9L9.6 8.7Z"/><path d="M7.6 2.5L9.6 3.95L7.6 5.4Z"/></g><circle cx="8.6" cy="9.6" r="1.45" fill="#1010c4"/><text x="0.4" y="4.2" font-family="Liberation Sans, sans-serif" font-weight="bold" font-size="5" fill="#111">H</text></svg>
<span class="x t" style="left:70px;top:262px;transform:translate(0.4px,0.44px) matrix(0.9936,0.0005,0,1,0,0);">[Port9]</span>
<div class="ln" style="left:48.5px;top:280.75px;width:7.4px;height:0.85px"></div>
<svg style="left:44.5px;top:277.13px" width="8" height="8" viewBox="0 0 8 8"><rect x="1.4" y="1.3" width="5.4" height="5.4" rx=".2" fill="#fff" stroke="#949494" stroke-width=".75"/><path d="M2.2 4H6M4.1 2.1V5.9" stroke="#5a5a5a" stroke-width=".8"/></svg>
<svg style="left:55.5px;top:273.28px" width="13" height="13" viewBox="0 0 13 13"><ellipse cx="6.2" cy="7.8" rx="4" ry="2" fill="#ee6aa8" opacity=".5"/><g fill="none" stroke="#2a0e80" stroke-width="1.45" stroke-linejoin="round" stroke-linecap="round"><path d="M1.6 6.9H10.4"/><path d="M4 6.9L5.8 4H8"/><path d="M5.2 6.9L7.2 9.3H8"/></g><g fill="#2a0e80"><circle cx="1.6" cy="6.9" r="1.35"/><path d="M9.6 5.1L12.2 6.9L9.6 8.7Z"/><path d="M7.6 2.5L9.6 3.95L7.6 5.4Z"/></g><circle cx="8.6" cy="9.6" r="1.45" fill="#3a1090"/><g fill="none" stroke="#e01c34" stroke-width=".9"><path d="M9.6 8.6L11.6 8.9"/><path d="M1.4 8.2L2.6 9.6"/></g><circle cx="10.8" cy="8.8" r="1.25" fill="#e01c34"/><circle cx="2" cy="9" r="1.1" fill="#e0403c"/><path d="M4.4 8.3L7.4 8.4" stroke="#e8406a" stroke-width="1"/><ellipse cx="4.2" cy="11.6" rx="1.5" ry=".7" fill="#a01c2c" transform="rotate(-20 4.2 11.6)"/><text x="0.4" y="4.2" font-family="Liberation Sans, sans-serif" font-weight="bold" font-size="5" fill="#111">F</text></svg>
<span class="x t" style="left:70px;top:274px;transform:translate(0.4px,0.88px) matrix(0.965,0.0005,0,1,0,0);">[Port10] : Intel 0033 Intel(R) Wireless Bluetooth(R) - 4× Bluetooth, Net</span>
<div class="ln" style="left:48.5px;top:293.19px;width:7.4px;height:0.85px"></div>
<svg style="left:55.5px;top:286.32px" width="13" height="12" viewBox="0 0 13 12"><g fill="none" stroke="#14149a" stroke-width="1.45" stroke-linejoin="round" stroke-linecap="round"><path d="M1.6 6.9H10.4"/><path d="M4 6.9L5.8 4H8"/><path d="M5.2 6.9L7.2 9.3H8"/></g><g fill="#14149a"><circle cx="1.6" cy="6.9" r="1.35"/><path d="M9.6 5.1L12.2 6.9L9.6 8.7Z"/><path d="M7.6 2.5L9.6 3.95L7.6 5.4Z"/></g><circle cx="8.6" cy="9.6" r="1.45" fill="#1010c4"/><text x="0.4" y="4.2" font-family="Liberation Sans, sans-serif" font-weight="bold" font-size="5" fill="#111">H</text></svg>
<span class="x t" style="left:70px;top:287px;transform:translate(0.4px,0.32px) matrix(0.9988,0.0005,0,1,0,0);">[Port11]</span>
<div class="ln" style="left:48.5px;top:305.63px;width:7.4px;height:0.85px"></div>
<svg style="left:55.5px;top:298.76px" width="13" height="12" viewBox="0 0 13 12"><g fill="none" stroke="#14149a" stroke-width="1.45" stroke-linejoin="round" stroke-linecap="round"><path d="M1.6 6.9H10.4"/><path d="M4 6.9L5.8 4H8"/><path d="M5.2 6.9L7.2 9.3H8"/></g><g fill="#14149a"><circle cx="1.6" cy="6.9" r="1.35"/><path d="M9.6 5.1L12.2 6.9L9.6 8.7Z"/><path d="M7.6 2.5L9.6 3.95L7.6 5.4Z"/></g><circle cx="8.6" cy="9.6" r="1.45" fill="#1010c4"/><text x="0.4" y="4.2" font-family="Liberation Sans, sans-serif" font-weight="bold" font-size="5" fill="#111">H</text></svg>
<span class="x t" style="left:70px;top:299px;transform:translate(0.4px,0.76px) matrix(0.9776,0.0005,0,1,0,0);">[Port12]</span>
<div class="ln" style="left:48.5px;top:318.07px;width:7.4px;height:0.85px"></div>
<svg style="left:55.5px;top:310.6px" width="13" height="13" viewBox="0 0 13 13"><ellipse cx="6.2" cy="7.8" rx="4" ry="2" fill="#ee6aa8" opacity=".5"/><g fill="none" stroke="#2a0e80" stroke-width="1.45" stroke-linejoin="round" stroke-linecap="round"><path d="M1.6 6.9H10.4"/><path d="M4 6.9L5.8 4H8"/><path d="M5.2 6.9L7.2 9.3H8"/></g><g fill="#2a0e80"><circle cx="1.6" cy="6.9" r="1.35"/><path d="M9.6 5.1L12.2 6.9L9.6 8.7Z"/><path d="M7.6 2.5L9.6 3.95L7.6 5.4Z"/></g><circle cx="8.6" cy="9.6" r="1.45" fill="#3a1090"/><g fill="none" stroke="#e01c34" stroke-width=".9"><path d="M9.6 8.6L11.6 8.9"/><path d="M1.4 8.2L2.6 9.6"/></g><circle cx="10.8" cy="8.8" r="1.25" fill="#e01c34"/><circle cx="2" cy="9" r="1.1" fill="#e0403c"/><path d="M4.4 8.3L7.4 8.4" stroke="#e8406a" stroke-width="1"/><ellipse cx="4.2" cy="11.6" rx="1.5" ry=".7" fill="#a01c2c" transform="rotate(-20 4.2 11.6)"/><text x="0.4" y="4.2" font-family="Liberation Sans, sans-serif" font-weight="bold" font-size="5" fill="#111">S</text></svg>
<div class="selbg" style="left:68.8px;top:312.85px;width:208.75px;height:11.6px"></div>
<span class="x t" style="left:70px;top:312px;transform:translate(0.4px,0.2px) matrix(0.9812,0.0005,0,1,0,0);">[Port13] : Realtek Gaming USB 2.5GbE Family Controller - Net</span>
<div class="ln" style="left:48.5px;top:330.51px;width:7.4px;height:0.85px"></div>
<svg style="left:55.5px;top:323.64px" width="13" height="12" viewBox="0 0 13 12"><g fill="none" stroke="#14149a" stroke-width="1.45" stroke-linejoin="round" stroke-linecap="round"><path d="M1.6 6.9H10.4"/><path d="M4 6.9L5.8 4H8"/><path d="M5.2 6.9L7.2 9.3H8"/></g><g fill="#14149a"><circle cx="1.6" cy="6.9" r="1.35"/><path d="M9.6 5.1L12.2 6.9L9.6 8.7Z"/><path d="M7.6 2.5L9.6 3.95L7.6 5.4Z"/></g><circle cx="8.6" cy="9.6" r="1.45" fill="#1010c4"/><text x="0.4" y="4.2" font-family="Liberation Sans, sans-serif" font-weight="bold" font-size="5" fill="#111">S</text></svg>
<span class="x t" style="left:70px;top:324px;transform:translate(0.4px,0.64px) matrix(0.9776,0.0005,0,1,0,0);">[Port14]</span>
<div class="ln" style="left:48.5px;top:342.95px;width:7.4px;height:0.85px"></div>
<svg style="left:55.5px;top:336.08px" width="13" height="12" viewBox="0 0 13 12"><g fill="none" stroke="#14149a" stroke-width="1.45" stroke-linejoin="round" stroke-linecap="round"><path d="M1.6 6.9H10.4"/><path d="M4 6.9L5.8 4H8"/><path d="M5.2 6.9L7.2 9.3H8"/></g><g fill="#14149a"><circle cx="1.6" cy="6.9" r="1.35"/><path d="M9.6 5.1L12.2 6.9L9.6 8.7Z"/><path d="M7.6 2.5L9.6 3.95L7.6 5.4Z"/></g><circle cx="8.6" cy="9.6" r="1.45" fill="#1010c4"/><text x="0.4" y="4.2" font-family="Liberation Sans, sans-serif" font-weight="bold" font-size="5" fill="#111">S</text></svg>
<span class="x t" style="left:70px;top:337px;transform:translate(0.4px,0.08px) matrix(0.9776,0.0005,0,1,0,0);">[Port15]</span>
<div class="ln" style="left:48.5px;top:355.39px;width:7.4px;height:0.85px"></div>
<svg style="left:55.5px;top:348.52px" width="13" height="12" viewBox="0 0 13 12"><g fill="none" stroke="#14149a" stroke-width="1.45" stroke-linejoin="round" stroke-linecap="round"><path d="M1.6 6.9H10.4"/><path d="M4 6.9L5.8 4H8"/><path d="M5.2 6.9L7.2 9.3H8"/></g><g fill="#14149a"><circle cx="1.6" cy="6.9" r="1.35"/><path d="M9.6 5.1L12.2 6.9L9.6 8.7Z"/><path d="M7.6 2.5L9.6 3.95L7.6 5.4Z"/></g><circle cx="8.6" cy="9.6" r="1.45" fill="#1010c4"/><text x="0.4" y="4.2" font-family="Liberation Sans, sans-serif" font-weight="bold" font-size="5" fill="#111">S</text></svg>
<span class="x t" style="left:70px;top:349px;transform:translate(0.4px,0.52px) matrix(0.9776,0.0005,0,1,0,0);">[Port16]</span>
<div class="ln" style="left:21.5px;top:367.83px;width:7.4px;height:0.85px"></div>
<svg style="left:17.5px;top:364.21px" width="8" height="8" viewBox="0 0 8 8"><rect x="1.4" y="1.3" width="5.4" height="5.4" rx=".2" fill="#fff" stroke="#949494" stroke-width=".75"/><path d="M2.2 4H6" stroke="#5a5a5a" stroke-width=".8"/></svg>
<svg style="left:28.6px;top:363.26px" width="12" height="10" viewBox="0 0 12 10"><rect x="0.1" y="0.7" width="9.9" height="7.6" fill="#17691f"/><rect x="0.1" y="0.7" width="9.9" height="1" fill="#2c8a2e"/><path d="M1 3.4L3 2.4L4.6 3.4L3.2 4.6Z" fill="#7ad860"/><path d="M4.8 4.2L7.4 2.6L8.6 3.4L6 5.4Z" fill="#5cc048"/><path d="M1.2 5.6L3 5.2L4.4 6.6L2.4 7.4Z" fill="#0d3d12"/><path d="M5 6L7.6 5.4L8.6 6.8L5.8 7.4Z" fill="#43a838"/><rect x="6" y="1.6" width="2.4" height="1" fill="#0d3d12"/><rect x="9.7" y="0" width="1.3" height="8.3" fill="#141414"/><rect x="3.4" y="8.3" width="4.4" height="0.9" fill="#7aa83a"/></svg>
<span class="x t" style="left:43px;top:361px;transform:translate(0.4px,0.96px) matrix(0.9876,0.0005,0,1,0,0);">USB4(TM) Host Router (Microsoft)</span>
<div class="ln" style="left:35.0px;top:380.27px;width:7.4px;height:0.85px"></div>
<svg style="left:43.6px;top:375.1px" width="12" height="11" viewBox="0 0 12 11"><path d="M0.8 1.6H3.6V8.4H0.8Z" fill="#2c2c2c"/><path d="M3.6 1.6L5.3 2.4V7.7L3.6 8.4Z" fill="#767676"/><path d="M0.8 8.4H3.6L8.2 7.1L8.4 7.8L3.8 9.3L0.8 9.1Z" fill="#8e8e8e"/><circle cx="7.3" cy="2.5" r="2.3" fill="#e6eaf0" stroke="#a0a8b2" stroke-width=".5"/><path d="M7.3 1.1V2.6" stroke="#6a7078" stroke-width=".5"/></svg>
<span class="x t" style="left:56px;top:374px;transform:translate(0.9px,0.4px) matrix(1.0034,0.0005,0,1,0,0);">USB4 Virtual power coordination device</span>
<div class="ln" style="left:35.0px;top:392.71px;width:7.4px;height:0.85px"></div>
<svg style="left:43.1px;top:388.64px" width="12" height="10" viewBox="0 0 12 10"><path d="M3.4 2.7L10.6 2L8.4 5L1.9 5.7Z" fill="#2a2a2a"/><path d="M0.6 5.2L2.2 4.6L2.6 5.6L1 6.1Z" fill="#a8a8a8"/></svg>
<span class="x t" style="left:56px;top:386px;transform:translate(0.9px,0.84px) matrix(0.9775,0.0005,0,1,0,0);">USB4 Root Router (1.0)</span>
<div class="ln" style="left:21.5px;top:405.15px;width:7.4px;height:0.85px"></div>
<svg style="left:17.5px;top:401.53px" width="8" height="8" viewBox="0 0 8 8"><rect x="1.4" y="1.3" width="5.4" height="5.4" rx=".2" fill="#fff" stroke="#949494" stroke-width=".75"/><path d="M2.2 4H6" stroke="#5a5a5a" stroke-width=".8"/></svg>
<svg style="left:28.6px;top:400.58px" width="12" height="10" viewBox="0 0 12 10"><rect x="0.1" y="0.7" width="9.9" height="7.6" fill="#17691f"/><rect x="0.1" y="0.7" width="9.9" height="1" fill="#2c8a2e"/><path d="M1 3.4L3 2.4L4.6 3.4L3.2 4.6Z" fill="#7ad860"/><path d="M4.8 4.2L7.4 2.6L8.6 3.4L6 5.4Z" fill="#5cc048"/><path d="M1.2 5.6L3 5.2L4.4 6.6L2.4 7.4Z" fill="#0d3d12"/><path d="M5 6L7.6 5.4L8.6 6.8L5.8 7.4Z" fill="#43a838"/><rect x="6" y="1.6" width="2.4" height="1" fill="#0d3d12"/><rect x="9.7" y="0" width="1.3" height="8.3" fill="#141414"/><rect x="3.4" y="8.3" width="4.4" height="0.9" fill="#7aa83a"/></svg>
<span class="x t" style="left:43px;top:399px;transform:translate(0.4px,0.28px) matrix(0.9876,0.0005,0,1,0,0);">USB4(TM) Host Router (Microsoft)</span>
<div class="ln" style="left:35.0px;top:417.59px;width:7.4px;height:0.85px"></div>
<svg style="left:43.6px;top:412.42px" width="12" height="11" viewBox="0 0 12 11"><path d="M0.8 1.6H3.6V8.4H0.8Z" fill="#2c2c2c"/><path d="M3.6 1.6L5.3 2.4V7.7L3.6 8.4Z" fill="#767676"/><path d="M0.8 8.4H3.6L8.2 7.1L8.4 7.8L3.8 9.3L0.8 9.1Z" fill="#8e8e8e"/><circle cx="7.3" cy="2.5" r="2.3" fill="#e6eaf0" stroke="#a0a8b2" stroke-width=".5"/><path d="M7.3 1.1V2.6" stroke="#6a7078" stroke-width=".5"/></svg>
<span class="x t" style="left:56px;top:411px;transform:translate(0.9px,0.72px) matrix(1.0034,0.0005,0,1,0,0);">USB4 Virtual power coordination device</span>
<div class="ln" style="left:35.0px;top:430.03px;width:7.4px;height:0.85px"></div>
<svg style="left:43.1px;top:425.96px" width="12" height="10" viewBox="0 0 12 10"><path d="M3.4 2.7L10.6 2L8.4 5L1.9 5.7Z" fill="#2a2a2a"/><path d="M0.6 5.2L2.2 4.6L2.6 5.6L1 6.1Z" fill="#a8a8a8"/></svg>
<span class="x t" style="left:56px;top:424px;transform:translate(0.9px,0.16px) matrix(0.9775,0.0005,0,1,0,0);">USB4 Root Router (1.0)</span>
</div>
<div class="pane">
<span class="x m" style="left:42px;top:0px;transform:translate(0.949px,0.66px) matrix(1.051,0.0005,0,1,0,0);">---------------- Connection Information ---------------</span>
<span class="x m" style="left:2px;top:9px;transform:translate(0.2px,0.142px) matrix(1.051,0.0005,0,1,0,0);">Connection Index         : 0x0D (Port 13)</span>
<span class="x m" style="left:2px;top:17px;transform:translate(0.2px,0.624px) matrix(1.051,0.0005,0,1,0,0);">Connection Status        : 0x01 (DeviceConnected)</span>
<span class="x m" style="left:2px;top:26px;transform:translate(0.2px,0.106px) matrix(1.051,0.0005,0,1,0,0);">Current Config Value     : 0x01 (Configuration 1)</span>
<span class="x m" style="left:2px;top:34px;transform:translate(0.2px,0.588px) matrix(1.051,0.0005,0,1,0,0);">Device Address           : 0x16 (22)</span>
<span class="x m" style="left:2px;top:43px;transform:translate(0.2px,0.07px) matrix(1.051,0.0005,0,1,0,0);">Is Hub                   : 0x00 (no)</span>
<span class="x m" style="left:2px;top:51px;transform:translate(0.2px,0.552px) matrix(1.051,0.0005,0,1,0,0);">Device Bus Speed         : 0x02 (High-Speed) -&gt; not true, see below in Connection Information V2</span>
<span class="x m" style="left:2px;top:60px;transform:translate(0.2px,0.034px) matrix(1.051,0.0005,0,1,0,0);">Number of open Pipes     : 0x03 (3 pipes to data endpoints)</span>
<span class="x m" style="left:2px;top:68px;transform:translate(0.2px,0.516px) matrix(1.051,0.0005,0,1,0,0);">Pipe[0]                  : EndpointID=1  Direction=IN   ScheduleOffset=0  Type=Bulk       wMaxPacketSize=0x400</span>
<span class="x m" style="left:2px;top:76px;transform:translate(0.2px,0.998px) matrix(1.051,0.0005,0,1,0,0);">Pipe[1]                  : EndpointID=2  Direction=OUT  ScheduleOffset=0  Type=Bulk       wMaxPacketSize=0x400</span>
<span class="x m" style="left:2px;top:85px;transform:translate(0.2px,0.48px) matrix(1.051,0.0005,0,1,0,0);">Pipe[2]                  : EndpointID=3  Direction=IN   ScheduleOffset=0  Type=Interrupt  wMaxPacketSize=0x2</span>
<span class="x m" style="left:2px;top:93px;transform:translate(0.2px,0.962px) matrix(1.051,0.0005,0,1,0,0);">Data (HexDump)           : 0D 00 00 00 12 01 20 03 00 00 00 09 DA 0B 56 81   ...... .......V.</span>
<span class="x m" style="left:139px;top:102px;transform:translate(0.729px,0.444px) matrix(1.051,0.0005,0,1,0,0);">F4 31 01 02 06 03 01 02 00 16 00 03 00 00 00 01   .1..............</span>
<span class="x m" style="left:139px;top:110px;transform:translate(0.729px,0.926px) matrix(1.051,0.0005,0,1,0,0);">00 00 00 07 05 81 02 00 04 00 00 00 00 00 07 05   ................</span>
<span class="x m" style="left:139px;top:119px;transform:translate(0.729px,0.408px) matrix(1.051,0.0005,0,1,0,0);">02 02 00 04 00 00 00 00 00 07 05 83 03 02 00 0B   ................</span>
<span class="x m" style="left:139px;top:127px;transform:translate(0.729px,0.89px) matrix(1.051,0.0005,0,1,0,0);">00 00 00 00                                       ....</span>
<span class="x m" style="left:42px;top:144px;transform:translate(0.949px,0.854px) matrix(1.051,0.0005,0,1,0,0);">--------------- Connection Information V2 -------------</span>
<span class="x m" style="left:2px;top:153px;transform:translate(0.2px,0.336px) matrix(1.051,0.0005,0,1,0,0);">Connection Index         : 0x0D (13)</span>
<span class="x m" style="left:2px;top:161px;transform:translate(0.2px,0.818px) matrix(1.051,0.0005,0,1,0,0);">Length                   : 0x10 (16 bytes)</span>
<span class="x m" style="left:2px;top:170px;transform:translate(0.2px,0.3px) matrix(1.051,0.0005,0,1,0,0);">SupportedUsbProtocols    : 0x04</span>
<span class="x m" style="left:7px;top:178px;transform:translate(0.294px,0.782px) matrix(1.051,0.0005,0,1,0,0);">Usb110                  : 0 (no, port not supports USB 1.1) -&gt; but Companion Port 2-1 does</span>
<span class="x m" style="left:7px;top:187px;transform:translate(0.294px,0.264px) matrix(1.051,0.0005,0,1,0,0);">Usb200                  : 0 (no, port not supports USB 2.0) -&gt; but Companion Port 2-1 does</span>
<div style="left:7.4px;top:195.76px;width:284.9px;height:7.8px;background:#181b1f"></div>
<span class="x m" style="left:7px;top:195px;transform:translate(0.294px,0.746px) matrix(1.051,0.0005,0,1,0,0);color:#fff;-webkit-text-stroke:.12px #fff">Usb300                  : 1 (yes, port supports USB 3.0)</span>
<span class="x m" style="left:7px;top:204px;transform:translate(0.294px,0.228px) matrix(1.051,0.0005,0,1,0,0);">ReservedMBZ             : 0x00</span>
<span class="x m" style="left:2px;top:212px;transform:translate(0.2px,0.71px) matrix(1.051,0.0005,0,1,0,0);">Flags                    : 0x03</span>
<span class="x m" style="left:7px;top:221px;transform:translate(0.294px,0.192px) matrix(1.051,0.0005,0,1,0,0);">DevIsOpAtSsOrHigher     : 1 (Device is operating at SuperSpeed or higher)</span>
<span class="x m" style="left:7px;top:229px;transform:translate(0.294px,0.674px) matrix(1.051,0.0005,0,1,0,0);">DevIsSsCapOrHigher      : 1 (Device is SuperSpeed capable or higher)</span>
<span class="x m" style="left:7px;top:238px;transform:translate(0.294px,0.156px) matrix(1.051,0.0005,0,1,0,0);">DevIsOpAtSsPlusOrHigher : 0 (Device is not operating at SuperSpeedPlus or higher)</span>
<span class="x m" style="left:7px;top:246px;transform:translate(0.294px,0.638px) matrix(1.051,0.0005,0,1,0,0);">DevIsSsPlusCapOrHigher  : 0 (Device is not SuperSpeedPlus capable or higher)</span>
<span class="x m" style="left:7px;top:255px;transform:translate(0.294px,0.12px) matrix(1.051,0.0005,0,1,0,0);">ReservedMBZ             : 0x00</span>
<span class="x m" style="left:2px;top:263px;transform:translate(0.2px,0.602px) matrix(1.051,0.0005,0,1,0,0);">Data (HexDump)           : 0D 00 00 00 10 00 00 00 04 00 00 00 03 00 00 00   ................</span>
<span class="x m" style="left:22px;top:280px;transform:translate(0.575px,0.566px) matrix(1.051,0.0005,0,1,0,0);">---------------------- Device Descriptor ----------------------</span>
<span class="x m" style="left:2px;top:289px;transform:translate(0.2px,0.048px) matrix(1.051,0.0005,0,1,0,0);">bLength                  : 0x12 (18 bytes)</span>
<span class="x m" style="left:2px;top:297px;transform:translate(0.2px,0.53px) matrix(1.051,0.0005,0,1,0,0);">bDescriptorType          : 0x01 (Device Descriptor)</span>
<span class="x m" style="left:2px;top:306px;transform:translate(0.2px,0.012px) matrix(1.051,0.0005,0,1,0,0);">bcdUSB                   : 0x320 (USB Version 3.2)</span>
<span class="x m" style="left:2px;top:314px;transform:translate(0.2px,0.494px) matrix(1.051,0.0005,0,1,0,0);">bDeviceClass             : 0x00 (defined by the interface descriptors)</span>
<span class="x m" style="left:2px;top:322px;transform:translate(0.2px,0.976px) matrix(1.051,0.0005,0,1,0,0);">bDeviceSubClass          : 0x00</span>
<span class="x m" style="left:2px;top:331px;transform:translate(0.2px,0.458px) matrix(1.051,0.0005,0,1,0,0);">bDeviceProtocol          : 0x00</span>
<span class="x m" style="left:2px;top:339px;transform:translate(0.2px,0.94px) matrix(1.051,0.0005,0,1,0,0);">bMaxPacketSize0          : 0x09 (9 bytes)</span>
<span class="x m" style="left:2px;top:348px;transform:translate(0.2px,0.422px) matrix(1.051,0.0005,0,1,0,0);">idVendor                 : 0x0BDA (Realtek Semiconductor Corp.)</span>
<span class="x m" style="left:2px;top:356px;transform:translate(0.2px,0.904px) matrix(1.051,0.0005,0,1,0,0);">idProduct                : 0x8156</span>
<span class="x m" style="left:2px;top:365px;transform:translate(0.2px,0.386px) matrix(1.051,0.0005,0,1,0,0);">bcdDevice                : 0x31F4</span>
<span class="x m" style="left:2px;top:373px;transform:translate(0.2px,0.868px) matrix(1.051,0.0005,0,1,0,0);">iManufacturer            : 0x01 (String Descriptor 1)</span>
<span class="x m" style="left:7px;top:382px;transform:translate(0.294px,0.35px) matrix(1.051,0.0005,0,1,0,0);">Language 0x0409         : "Realtek"</span>
<span class="x m" style="left:2px;top:390px;transform:translate(0.2px,0.832px) matrix(1.051,0.0005,0,1,0,0);">iProduct                 : 0x02 (String Descriptor 2)</span>
<span class="x m" style="left:7px;top:399px;transform:translate(0.294px,0.314px) matrix(1.051,0.0005,0,1,0,0);">Language 0x0409         : "USB 10/100/1G/2.5G LAN"</span>
<span class="x m" style="left:2px;top:407px;transform:translate(0.2px,0.796px) matrix(1.051,0.0005,0,1,0,0);">iSerialNumber            : 0x06 (String Descriptor 6)</span>
<span class="x m" style="left:7px;top:416px;transform:translate(0.294px,0.278px) matrix(1.051,0.0005,0,1,0,0);">Language 0x0409         : "4F13000001"</span>
<span class="x m" style="left:2px;top:424px;transform:translate(0.2px,0.76px) matrix(1.051,0.0005,0,1,0,0);">bNumConfigurations       : 0x03 (3 Configurations)</span>
<span class="x m" style="left:2px;top:433px;transform:translate(0.2px,0.242px) matrix(1.051,0.0005,0,1,0,0);">Data (HexDump)           : 12 01 20 03 00 00 00 09 DA 0B 56 81 F4 31 01 02   .. .......V..1..</span>
<span class="x m" style="left:139px;top:441px;transform:translate(0.729px,0.724px) matrix(1.051,0.0005,0,1,0,0);">06 03                                             ..</span>
<span class="x m" style="left:22px;top:458px;transform:translate(0.575px,0.688px) matrix(1.051,0.0005,0,1,0,0);">------------------ Configuration Descriptor -------------------</span>
<span class="x m" style="left:2px;top:467px;transform:translate(0.2px,0.17px) matrix(1.051,0.0005,0,1,0,0);">bLength                  : 0x09 (9 bytes)</span>
<span class="x m" style="left:2px;top:475px;transform:translate(0.2px,0.652px) matrix(1.051,0.0005,0,1,0,0);">bDescriptorType          : 0x02 (Configuration Descriptor)</span>
<span class="x m" style="left:2px;top:484px;transform:translate(0.2px,0.134px) matrix(1.051,0.0005,0,1,0,0);">wTotalLength             : 0x0039 (57 bytes)</span>
<span class="x m" style="left:2px;top:492px;transform:translate(0.2px,0.616px) matrix(1.051,0.0005,0,1,0,0);">bNumInterfaces           : 0x01 (1 Interface)</span>
<span class="x m" style="left:2px;top:501px;transform:translate(0.2px,0.098px) matrix(1.051,0.0005,0,1,0,0);">bConfigurationValue      : 0x01 (Configuration 1)</span>
<span class="x m" style="left:2px;top:509px;transform:translate(0.2px,0.58px) matrix(1.051,0.0005,0,1,0,0);">iConfiguration           : 0x00 (No String Descriptor)</span>
<span class="x m" style="left:2px;top:518px;transform:translate(0.2px,0.062px) matrix(1.051,0.0005,0,1,0,0);">bmAttributes             : 0xA0</span>
<span class="x m" style="left:7px;top:526px;transform:translate(0.294px,0.544px) matrix(1.051,0.0005,0,1,0,0);">D7: Reserved, set 1     : 0x01</span>
<span class="x m" style="left:7px;top:535px;transform:translate(0.294px,0.026px) matrix(1.051,0.0005,0,1,0,0);">D6: Self Powered        : 0x00 (no)</span>
<span class="x m" style="left:7px;top:543px;transform:translate(0.294px,0.508px) matrix(1.051,0.0005,0,1,0,0);">D5: Remote Wakeup       : 0x01 (yes)</span>
<span class="x m" style="left:7px;top:551px;transform:translate(0.294px,0.99px) matrix(1.051,0.0005,0,1,0,0);">D4..0: Reserved, set 0  : 0x00</span>
<span class="x m" style="left:2px;top:560px;transform:translate(0.2px,0.472px) matrix(1.051,0.0005,0,1,0,0);">MaxPower                 : 0x20 (256 mA)</span>
<span class="x m" style="left:2px;top:568px;transform:translate(0.2px,0.954px) matrix(1.051,0.0005,0,1,0,0);">Data (HexDump)           : 09 02 39 00 01 01 00 A0 20 09 04 00 00 03 FF FF   ..9..... .......</span>
<span class="x m" style="left:139px;top:577px;transform:translate(0.729px,0.436px) matrix(1.051,0.0005,0,1,0,0);">00 00 07 05 81 02 00 04 00 06 30 03 00 00 00 07   ..........0.....</span>
<span class="x m" style="left:139px;top:585px;transform:translate(0.729px,0.918px) matrix(1.051,0.0005,0,1,0,0);">05 02 02 00 04 00 06 30 03 00 00 00 07 05 83 03   .......0........</span>
<span class="x m" style="left:139px;top:594px;transform:translate(0.729px,0.4px) matrix(1.051,0.0005,0,1,0,0);">02 00 0B 06 30 00 00 02 00                        ....0....</span>
<span class="x m" style="left:42px;top:611px;transform:translate(0.949px,0.364px) matrix(1.051,0.0005,0,1,0,0);">---------------- Interface Descriptor -----------------</span>
<span class="x m" style="left:2px;top:619px;transform:translate(0.2px,0.846px) matrix(1.051,0.0005,0,1,0,0);">bLength                  : 0x09 (9 bytes)</span>
<span class="x m" style="left:2px;top:628px;transform:translate(0.2px,0.328px) matrix(1.051,0.0005,0,1,0,0);">bDescriptorType          : 0x04 (Interface Descriptor)</span>
<span class="x m" style="left:2px;top:636px;transform:translate(0.2px,0.81px) matrix(1.051,0.0005,0,1,0,0);">bInterfaceNumber         : 0x00 (Interface 0)</span>
<span class="x m" style="left:2px;top:645px;transform:translate(0.2px,0.292px) matrix(1.051,0.0005,0,1,0,0);">bAlternateSetting        : 0x00</span>
<span class="x m" style="left:2px;top:653px;transform:translate(0.2px,0.774px) matrix(1.051,0.0005,0,1,0,0);">bNumEndpoints            : 0x03 (3 Endpoints)</span>
<span class="x m" style="left:2px;top:662px;transform:translate(0.2px,0.256px) matrix(1.051,0.0005,0,1,0,0);">bInterfaceClass          : 0xFF (Vendor Specific)</span>
<span class="x m" style="left:2px;top:670px;transform:translate(0.2px,0.738px) matrix(1.051,0.0005,0,1,0,0);">bInterfaceSubClass       : 0xFF</span>
<span class="x m" style="left:2px;top:679px;transform:translate(0.2px,0.22px) matrix(1.051,0.0005,0,1,0,0);">bInterfaceProtocol       : 0x00</span>
<span class="x m" style="left:2px;top:687px;transform:translate(0.2px,0.702px) matrix(1.051,0.0005,0,1,0,0);">iInterface               : 0x00 (No String Descriptor)</span>
<span class="x m" style="left:2px;top:696px;transform:translate(0.2px,0.184px) matrix(1.051,0.0005,0,1,0,0);">Data (HexDump)           : 09 04 00 00 03 FF FF 00 00                        .........</span>
<span class="x m" style="left:42px;top:713px;transform:translate(0.949px,0.148px) matrix(1.051,0.0005,0,1,0,0);">----------------- Endpoint Descriptor -----------------</span>
<span class="x m" style="left:2px;top:721px;transform:translate(0.2px,0.63px) matrix(1.051,0.0005,0,1,0,0);">bLength                  : 0x07 (7 bytes)</span>
<span class="x m" style="left:2px;top:730px;transform:translate(0.2px,0.112px) matrix(1.051,0.0005,0,1,0,0);">bDescriptorType          : 0x05 (Endpoint Descriptor)</span>
<span class="x m" style="left:2px;top:738px;transform:translate(0.2px,0.594px) matrix(1.051,0.0005,0,1,0,0);">bEndpointAddress         : 0x81 (Direction=IN EndpointID=1)</span>
<span class="x m" style="left:2px;top:747px;transform:translate(0.2px,0.076px) matrix(1.051,0.0005,0,1,0,0);">bmAttributes             : 0x02 (TransferType=Bulk)</span>
<div class="vsb"><div style="left:6px;top:102px;width:2px;height:115px;background:#727272;border-radius:1px"></div></div>
<div class="hsb"><div style="left:12px;top:5.4px;width:221px;height:1.6px;background:#737373;border-radius:1px"></div></div>
</div>
<div style="left:0;top:813px;width:996px;height:1px;background:#e9e9e9"></div>
<span class="x st" style="left:3px;top:813px;transform:translate(0px,0.4px) matrix(0.9294,0.0005,0,1,0,0);">Host Controllers: 4</span>
<span class="x st" style="left:71px;top:813px;transform:translate(0px,0.4px) matrix(0.9434,0.0005,0,1,0,0);">Root Hubs: 2</span>
<span class="x st" style="left:121px;top:813px;transform:translate(0.5px,0.4px) matrix(0.9433,0.0005,0,1,0,0);">Standard Hubs: 2</span>
<span class="x st" style="left:186px;top:813px;transform:translate(0px,0.4px) matrix(0.9655,0.0005,0,1,0,0);">Peripheral Devices: 6</span>
<span class="x st" style="left:265px;top:813px;transform:translate(0.5px,0.4px) matrix(0.9435,0.0005,0,1,0,0);">Child Devices: 25</span>
<svg style="left:985.5px;top:817px" width="8" height="8" viewBox="0 0 8 8"><g fill="#b4b4b4"><rect x="5.6" y="5.6" width="1.2" height="1.2"/><rect x="5.6" y="3" width="1.2" height="1.2"/><rect x="3" y="5.6" width="1.2" height="1.2"/><rect x="5.6" y=".4" width="1.2" height="1.2"/><rect x=".4" y="5.6" width="1.2" height="1.2"/><rect x="3" y="3" width="1.2" height="1.2"/></g></svg>
<div style="left:0;top:825.4px;width:996px;height:1.2px;background:#fbfbfb"></div><div style="left:995px;top:21.5px;width:1px;height:805px;background:#f6f7fa"></div>
</div></body></html>
